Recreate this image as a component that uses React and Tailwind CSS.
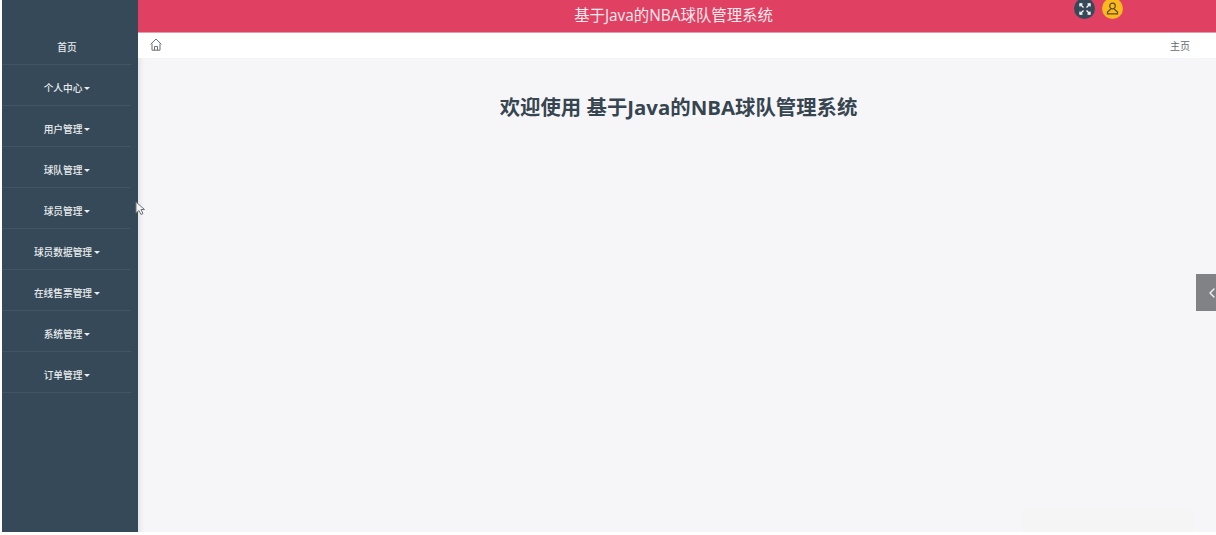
import { ChevronLeft } from "lucide-react";

const font = { fontFamily: '"Open Sans", "Noto Sans CJK SC", sans-serif' };

const menu = [
  { name: "首页" },
  { name: "个人中心", caret: true },
  { name: "用户管理", caret: true },
  { name: "球队管理", caret: true },
  { name: "球员管理", caret: true },
  { name: "球员数据管理", caret: true },
  { name: "在线售票管理", caret: true },
  { name: "系统管理", caret: true },
  { name: "订单管理", caret: true },
];

function Sidebar() {
  return (
    <aside className="w-[136px] shrink-0 bg-[#364958] pt-6">
      {menu.map((item) => (
        <div
          key={item.name}
          className="mr-[7px] h-[41px] flex items-center justify-center gap-[2px] border-b border-[#425564] pt-[8px] pl-[1px] text-[9.700px] font-medium text-[#e8ecee]"
        >
          <span>{item.name}</span>
          {item.caret && (
            <span className="mt-[-1px] border-x-[3px] border-t-[3px] border-x-transparent border-t-[#e8ecee]" />
          )}
        </div>
      ))}
    </aside>
  );
}

function Cursor() {
  return (
    <svg className="absolute left-[135px] top-[201px]" width="10" height="15" viewBox="0 0 10 15">
      <path d="M1 1v11l3-2.500 2 4 2-1-2-4h3.500z" fill="#f4f4f6" stroke="#6f7478" strokeWidth="1" />
    </svg>
  );
}

function HomeIcon() {
  return (
    <svg className="mt-[-3px]" width="12" height="13" viewBox="0 0 12 13" fill="none" stroke="#6a7076" strokeWidth="1">
      <path d="M0.700 6.200 6 1l5.300 5.200" />
      <path d="M2 5.500v6.700h8V5.500" />
      <path d="M4.500 12.200V8.500h3v3.700" />
    </svg>
  );
}

function ExpandIcon() {
  return (
    <svg width="12" height="12" viewBox="0 0 12 12" fill="none" stroke="#fff" strokeWidth="1.300">
      <path d="M4.500 4.500 1 1M7.500 4.500 11 1M4.500 7.500 1 11M7.500 7.500 11 11" />
      <path d="M1 3.500V1h2.500M8.500 1H11v2.500M1 8.500V11h2.500M8.500 11H11V8.500" />
    </svg>
  );
}

function UserIcon() {
  return (
    <svg width="13" height="13" viewBox="0 0 13 13" fill="none" stroke="#5e4a1c" strokeWidth="1.200">
      <circle cx="6.500" cy="4" r="2.800" />
      <path d="M4.800 7 1.500 10v1.800h10V10L8.200 7" />
    </svg>
  );
}

export default function App() {
  return (
    <div className="relative h-[535px] w-[1216px] overflow-hidden bg-white" style={font}>
      <div className="flex h-[532px] pl-[2px]">
        <Sidebar />
        <div className="flex min-w-0 flex-1 flex-col">
          <header className="relative flex h-[33px] shrink-0 items-center justify-center border-b border-[#d9a0ae] bg-[#e04163] pr-[7px] text-[15.400px] text-[#fbe9ee]">
            基于Java的NBA球队管理系统
            <div className="absolute left-[936px] top-[-2px] flex gap-[7px]">
              <span className="flex h-[21px] w-[21px] items-center justify-center rounded-full bg-[#364958]">
                <ExpandIcon />
              </span>
              <span className="flex h-[21px] w-[21px] items-center justify-center rounded-full bg-[#fbb91e]">
                <UserIcon />
              </span>
            </div>
          </header>
          <div className="flex h-[25px] shrink-0 items-center justify-between bg-white pl-3 pr-[26px] text-[10px] text-[#666b70]">
            <HomeIcon />
            <span className="mt-[1px]">主页</span>
          </div>
          <main className="relative flex-1 bg-[#f6f6f9] shadow-[inset_6px_0_5px_-4px_#e2e2e4]">
            <h1 className="mt-[35px] pl-[3px] text-center text-[20.400px] leading-[28px] font-bold text-[#36454f]">
              欢迎使用 基于Java的NBA球队管理系统
            </h1>
            <div className="absolute right-0 top-[216px] flex h-[37px] w-5 items-center overflow-hidden bg-[#808285] pl-[8px] text-[#f2f2f2]">
              <ChevronLeft size={16} strokeWidth={2} className="shrink-0" />
            </div>
            <div className="absolute bottom-0 left-[884px] h-[25px] w-[172px] bg-[#f5f5f6]" />
          </main>
        </div>
      </div>
      <Cursor />
    </div>
  );
}
